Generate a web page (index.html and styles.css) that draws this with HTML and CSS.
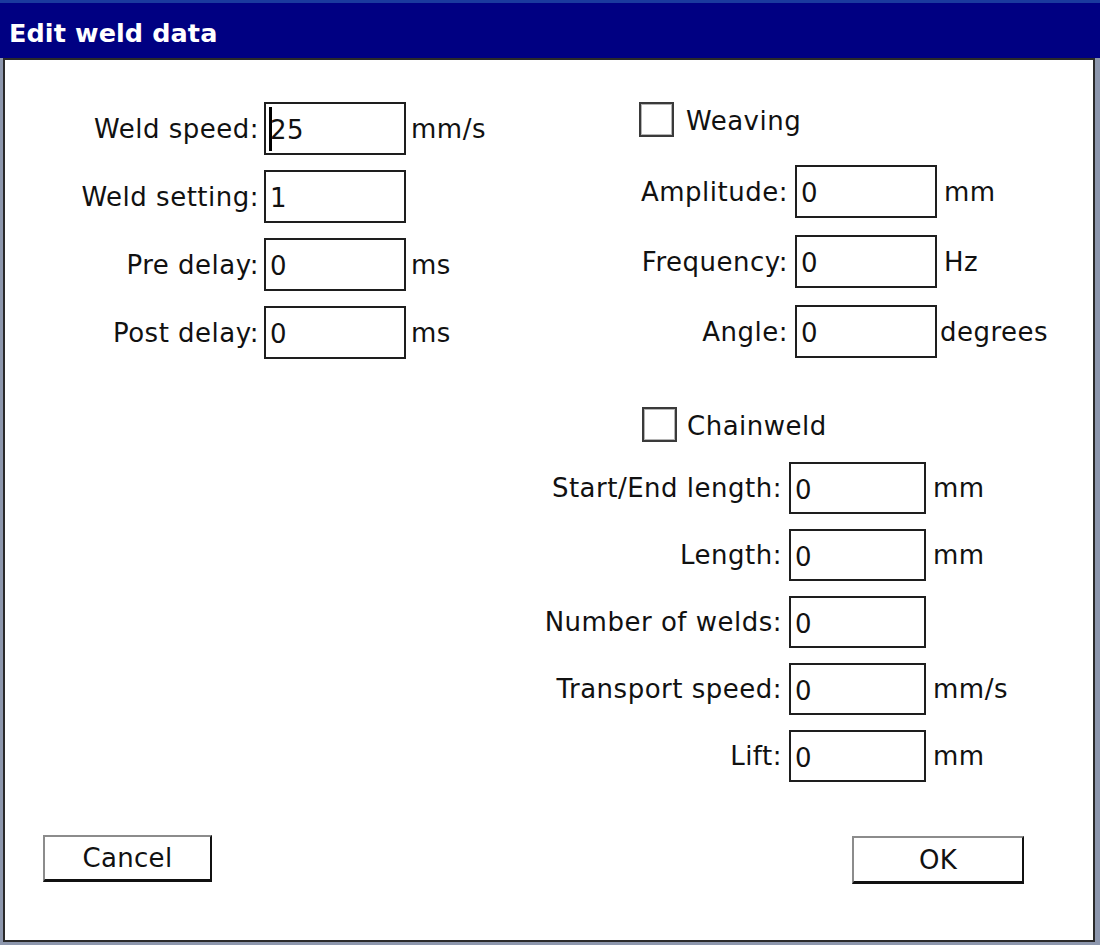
FILE: index.html
```html
<!DOCTYPE html>
<html lang="en">
<head>
<meta charset="utf-8">
<title>Edit weld data</title>
<link rel="stylesheet" href="styles.css">
</head>
<body>
<div class="window">
  <div class="titlebar">Edit weld data</div>
  <div class="dialog">
    <div class="content">
      <div class="left-col">
        <div class="form form-left">
          <span class="label">Weld speed:</span>
          <div class="field"><span class="caret"></span>25</div>
          <span class="unit">mm/s</span>

          <span class="label">Weld setting:</span>
          <div class="field">1</div>
          <span class="unit"></span>

          <span class="label">Pre delay:</span>
          <div class="field">0</div>
          <span class="unit">ms</span>

          <span class="label">Post delay:</span>
          <div class="field">0</div>
          <span class="unit">ms</span>
        </div>
      </div>

      <div class="right-col">
        <div class="group group-weave">
          <div class="check check-weave"><span class="box"></span><span class="check-text">Weaving</span></div>
          <div class="form form-weave">
            <span class="label">Amplitude:</span>
            <div class="field">0</div>
            <span class="unit">mm</span>

            <span class="label">Frequency:</span>
            <div class="field">0</div>
            <span class="unit">Hz</span>

            <span class="label">Angle:</span>
            <div class="field">0</div>
            <span class="unit unit-tight">degrees</span>
          </div>
        </div>

        <div class="group group-chain">
          <div class="check check-chain"><span class="box"></span><span class="check-text">Chainweld</span></div>
          <div class="form form-chain">
            <span class="label">Start/End length:</span>
            <div class="field">0</div>
            <span class="unit">mm</span>

            <span class="label">Length:</span>
            <div class="field">0</div>
            <span class="unit">mm</span>

            <span class="label">Number of welds:</span>
            <div class="field">0</div>
            <span class="unit"></span>

            <span class="label">Transport speed:</span>
            <div class="field">0</div>
            <span class="unit">mm/s</span>

            <span class="label">Lift:</span>
            <div class="field">0</div>
            <span class="unit">mm</span>
          </div>
        </div>
      </div>
    </div>

    <div class="buttons">
      <button class="btn btn-cancel" type="button">Cancel</button>
      <button class="btn btn-ok" type="button">OK</button>
    </div>
  </div>
</div>
</body>
</html>
```
FILE: styles.css
```css
* {
  box-sizing: border-box;
}

html,
body {
  margin: 0;
  padding: 0;
  height: 945px;
  overflow: hidden;
}

body {
  background: #8d97ad;
  font-family: "DejaVu Sans", Verdana, sans-serif;
}

.window {
  width: 1100px;
  height: 945px;
}

.titlebar {
  height: 58px;
  background: #000082;
  border-top: 3px solid #1a3a9e;
  color: #ffffff;
  font-weight: bold;
  font-size: 25.5px;
  line-height: normal;
  padding: 15px 0 0 9px;
  letter-spacing: 0.1px;
}

.dialog {
  margin-left: 3px;
  width: 1092px;
  height: 884px;
  background: #ffffff;
  border: 2px solid #2a2a2a;
  display: flex;
  flex-direction: column;
  color: #111111;
  font-size: 26px;
  letter-spacing: 0.5px;
}

.content {
  display: flex;
  padding-top: 42px;
}

.left-col {
  width: 530px;
  flex: none;
}

.right-col {
  flex: 1;
  display: flex;
  flex-direction: column;
}

.form {
  display: grid;
  align-items: center;
}

.form-left {
  margin-left: 54px;
  grid-template-columns: 200px 142px auto;
  grid-auto-rows: 53px;
  column-gap: 5px;
  row-gap: 15px;
}

.form-weave {
  margin-top: 28px;
  grid-template-columns: 253px 142px auto;
  grid-auto-rows: 53px;
  column-gap: 7px;
  row-gap: 17px;
}

.form-chain {
  margin-top: 20px;
  grid-template-columns: 247px 137px auto;
  grid-auto-rows: 52px;
  column-gap: 7px;
  row-gap: 15px;
}

.label {
  text-align: right;
  white-space: nowrap;
}

.unit {
  white-space: nowrap;
}

.unit-tight {
  margin-left: -4px;
}

.field {
  height: 100%;
  border: 2px solid #1e1e1e;
  background: #ffffff;
  display: flex;
  align-items: center;
  padding-left: 4px;
  padding-top: 3px;
}

.caret {
  display: inline-block;
  width: 3px;
  height: 44px;
  background: #000000;
  margin-left: -1px;
  margin-right: -2px;
  margin-top: -3px;
}

.check {
  display: flex;
  align-items: center;
  gap: 12px;
  height: 35px;
}

.check-weave {
  margin-left: 104px;
}

.group-chain {
  margin-top: 49px;
}

.check-chain {
  margin-left: 107px;
  gap: 10px;
}

.box {
  width: 35px;
  height: 35px;
  border: 2px solid #3a3a3a;
  box-shadow: inset 0 0 0 1px #b4b4b4;
  background: #ffffff;
  flex: none;
}

.check-text {
  padding-top: 2px;
}

.buttons {
  margin-top: auto;
  display: flex;
  justify-content: space-between;
  align-items: flex-end;
  padding: 0 69px 56px 38px;
}

.btn {
  background: #ffffff;
  border: 2px solid;
  border-color: #8c8c8c #111111 #111111 #8c8c8c;
  border-bottom-width: 3px;
  font-family: "DejaVu Sans", Verdana, sans-serif;
  font-size: 26px;
  letter-spacing: 0.3px;
  color: #111111;
  padding: 0;
}

.btn-cancel {
  width: 169px;
  height: 47px;
  margin-bottom: 2px;
}

.btn-ok {
  width: 172px;
  height: 48px;
}
```
